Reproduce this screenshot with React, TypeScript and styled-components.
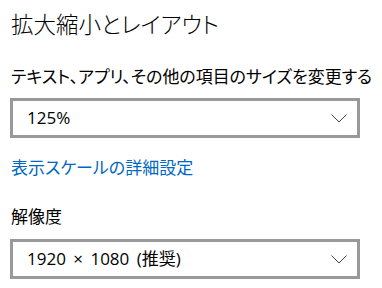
import React from 'react';
import styled, { createGlobalStyle } from 'styled-components';

const GlobalStyle = createGlobalStyle`
html, body {
  margin: 0;
  padding: 0;
  background: #ffffff;
}
body {
  font-family: 'Noto Sans CJK JP', sans-serif;
  color: #000000;
}
`

const PageDiv = styled.div`
display: flex;
flex-direction: column;
align-items: flex-start;
padding: 11px 0 0 11px;
width: 382px;
height: 288px;
box-sizing: border-box;
overflow: hidden;
`

const TitleDiv = styled.div`
font-size: 22.5px;
line-height: 24px;
font-weight: 300;
font-feature-settings: 'palt';
white-space: nowrap;
`

const LabelDiv = styled.div<{ $top: number }>`
margin-top: ${p => p.$top}px;
font-size: 17px;
line-height: 20px;
font-weight: 400;
letter-spacing: -0.05px;
font-feature-settings: 'palt';
white-space: nowrap;
`

const LinkDiv = styled.a`
margin-top: 19px;
font-size: 17px;
line-height: 20px;
color: #0067c0;
text-decoration: none;
font-feature-settings: 'palt';
white-space: nowrap;
cursor: pointer;
`

const ComboBox = styled.div<{ $top: number }>`
margin-top: ${p => p.$top}px;
margin-left: -1px;
width: 350px;
height: 40px;
box-sizing: border-box;
border: 3px solid #999999;
background: #ffffff;
display: flex;
align-items: center;
justify-content: space-between;
padding: 0 10px 0 14px;
`

const ComboText = styled.span`
font-family: 'Open Sans', 'Noto Sans CJK JP', sans-serif;
font-size: 17px;
line-height: 20px;
word-spacing: 3px;
color: #000000;
white-space: nowrap;
`

const Chevron = () => (
  <svg width="16" height="9" viewBox="0 0 16 9">
    <polyline points="0.5,0.5 8,8 15.5,0.5" fill="none" stroke="#444" strokeWidth="1" />
  </svg>
)

function App() {
  return (
    <PageDiv>
      <GlobalStyle />
      <TitleDiv>拡大縮小とレイアウト</TitleDiv>
      <LabelDiv $top={31}>テキスト、アプリ、その他の項目のサイズを変更する</LabelDiv>
      <ComboBox $top={12}>
        <ComboText>125%</ComboText>
        <Chevron />
      </ComboBox>
      <LinkDiv>表示スケールの詳細設定</LinkDiv>
      <LabelDiv $top={29}>解像度</LabelDiv>
      <ComboBox $top={13}>
        <ComboText>1920 × 1080 (推奨)</ComboText>
        <Chevron />
      </ComboBox>
    </PageDiv>
  );
}

export default App;
